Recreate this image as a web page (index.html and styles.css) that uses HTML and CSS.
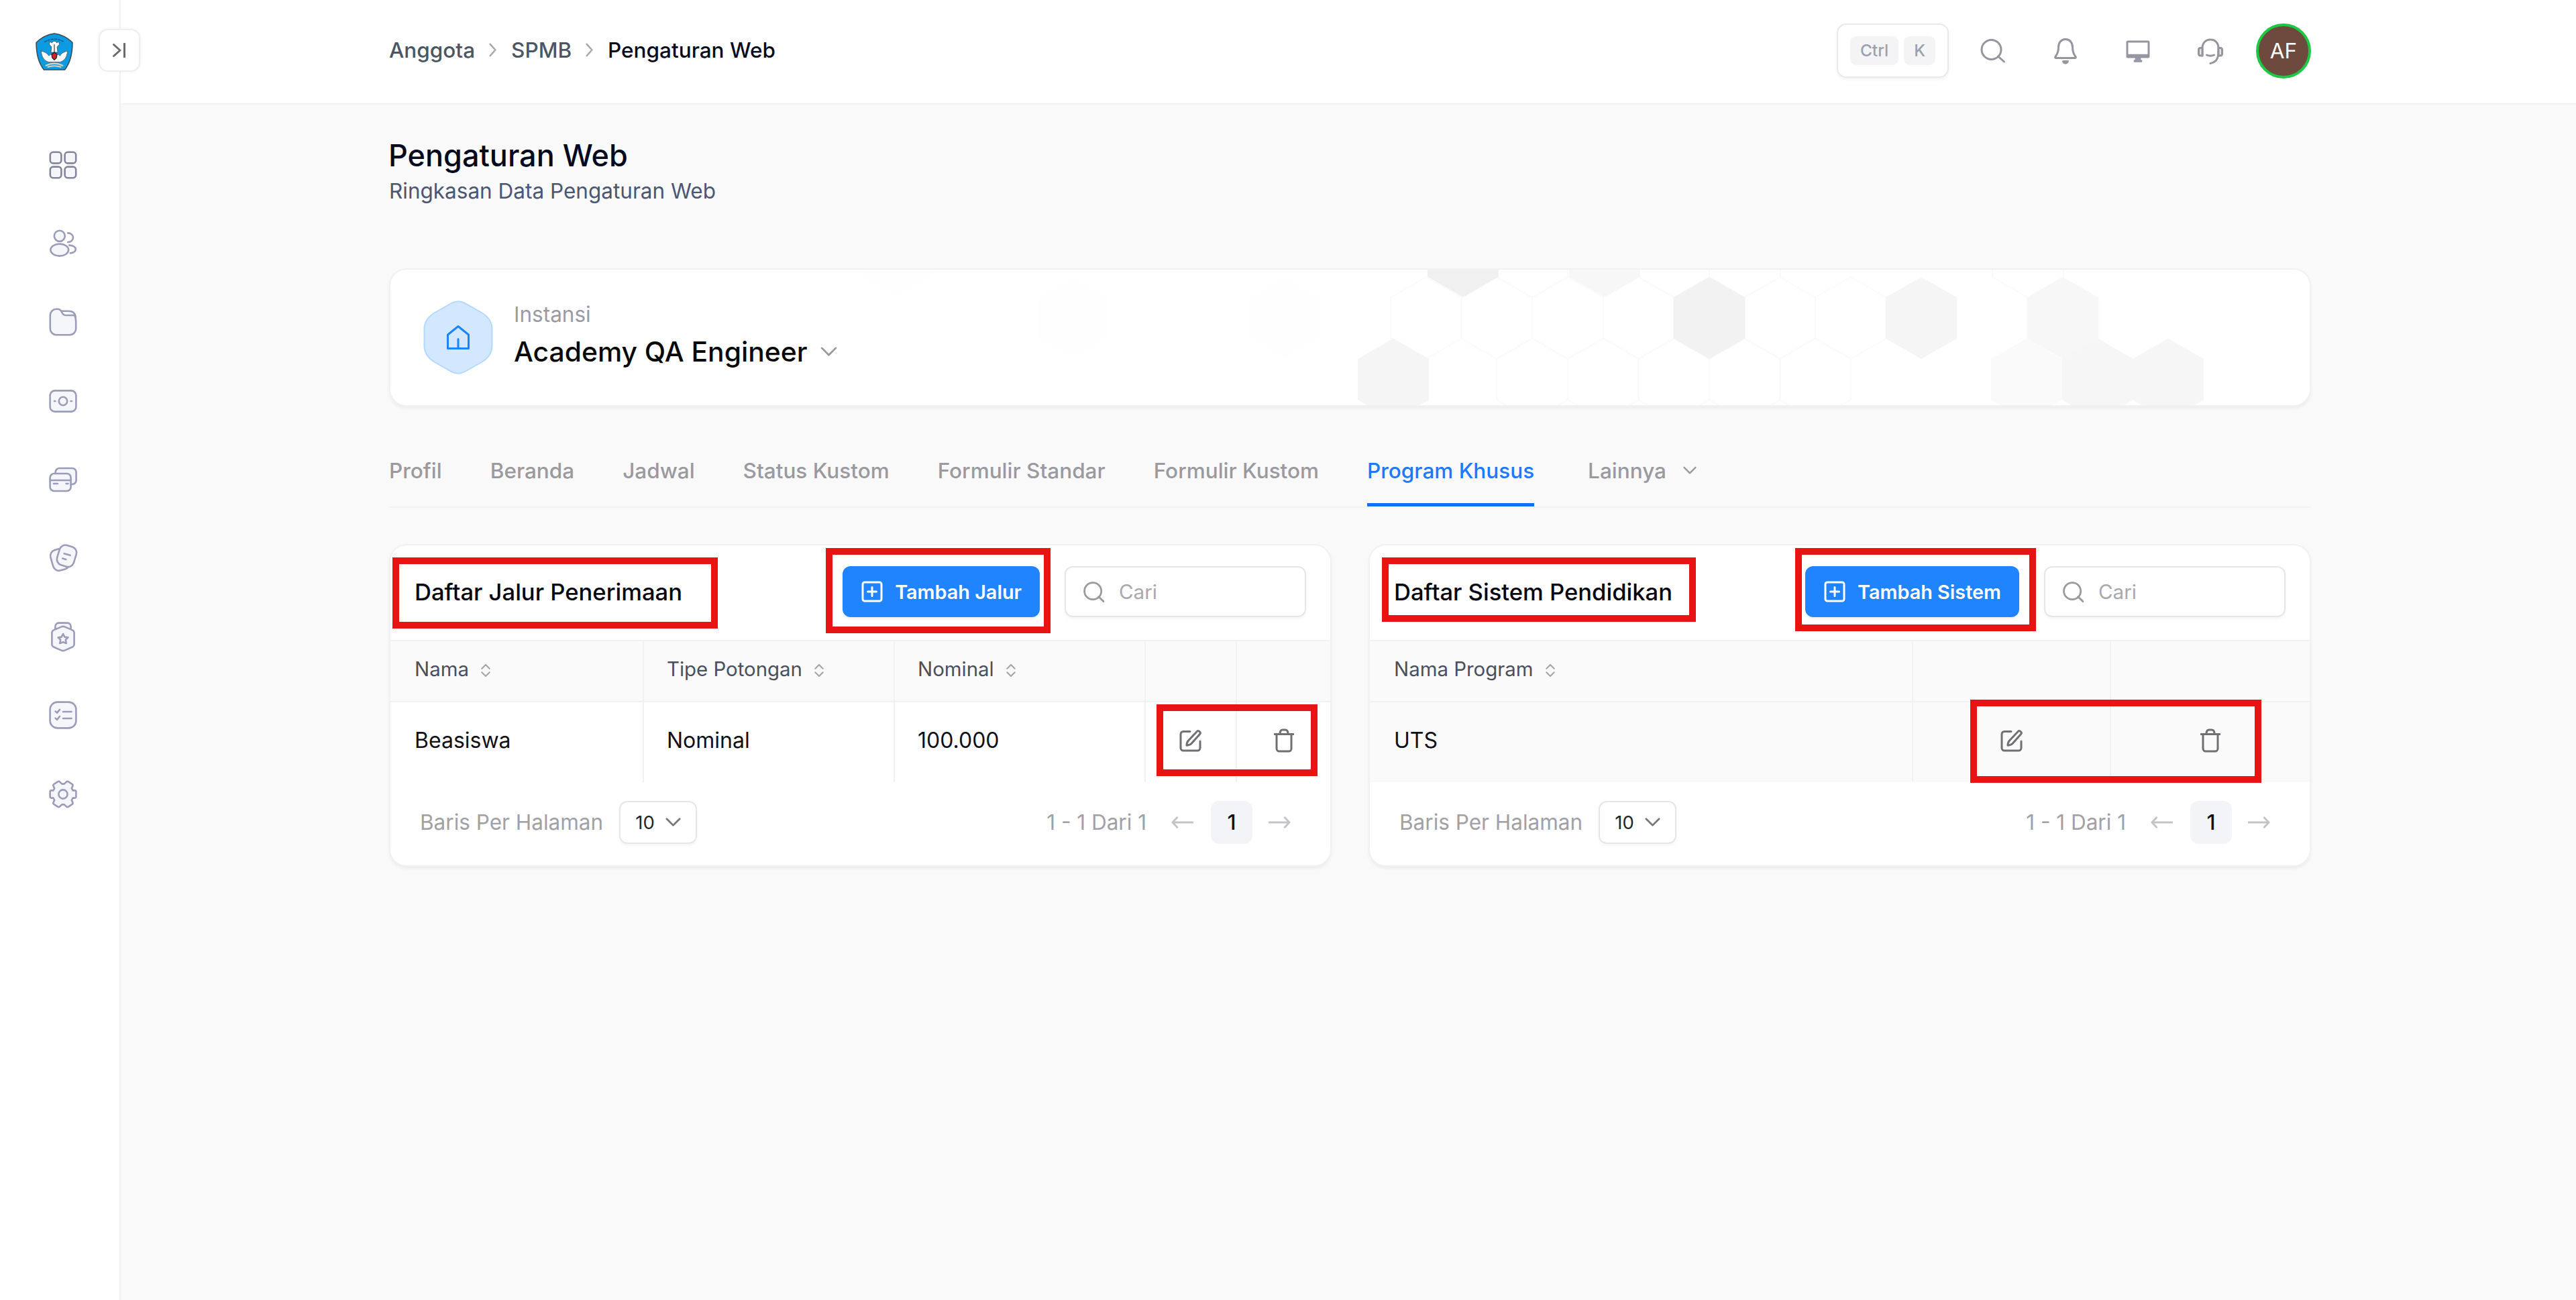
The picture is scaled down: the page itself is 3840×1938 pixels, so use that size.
FILE: index.html
```html
<!DOCTYPE html>
<html lang="id">
<head>
    <meta charset="UTF-8">
    <meta name="viewport" content="width=device-width, initial-scale=1.0">
    <title>Pengaturan Web</title>
    <link rel="stylesheet" href="styles.css">
</head>
<body>
    <!-- Shared icons -->
    <svg class="sprite" xmlns="http://www.w3.org/2000/svg">
        <symbol id="search" viewBox="0 0 34 34">
            <circle cx="15.5" cy="15.5" r="13.8"/><path d="M25 25l8 7.5"/>
        </symbol>
        <symbol id="plus" viewBox="0 0 32 32">
            <rect x="2" y="2" width="28" height="28" rx="3"/><path d="M16 9.5v13M9.5 16h13"/>
        </symbol>
        <symbol id="sort" viewBox="0 0 16 22">
            <path d="M2 8l6-6 6 6M2 14l6 6 6-6"/>
        </symbol>
        <symbol id="down" viewBox="0 0 26 16">
            <path d="M2 2l11 11L24 2"/>
        </symbol>
        <symbol id="right" viewBox="0 0 14 24">
            <path d="M2 2l9 10-9 10"/>
        </symbol>
        <symbol id="edit" viewBox="0 0 34 34">
            <path d="M16 3.500H6a4 4 0 0 0-4 4V28a4 4 0 0 0 4 4h21a4 4 0 0 0 4-4V18"/>
            <path d="M26.500 3.200c2-2 6.200 1.800 4.200 4L18 21.500c-1.500 1.600-3.500 2.300-7 2.700 0-3.500.7-5.300 2.300-7z"/>
        </symbol>
        <symbol id="trash" viewBox="0 0 30 36">
            <path d="M1 8.500h28M4 9v21a4 4 0 0 0 4 4h14a4 4 0 0 0 4-4V9M9 8c0-4 1-6 4-6h4c3 0 4 2 4 6"/>
        </symbol>
        <symbol id="prev" viewBox="0 0 34 18">
            <path d="M33 9H2M9 1.500L2 9l7 7.500"/>
        </symbol>
        <symbol id="next" viewBox="0 0 34 18">
            <path d="M1 9h31M25 1.500L32 9l-7 7.500"/>
        </symbol>
    </svg>

    <aside class="sidebar">
        <svg class="logo" viewBox="0 0 54 54">
            <path d="M27 1C35 2 45 6 53 14c0 15-3 29-11 39H12C4 43 1 29 1 14 9 6 19 2 27 1z" fill="#0c9be0" stroke="#3d4a55" stroke-width="1.500"/>
            <path d="M13 13q14-8 28 0" fill="none" stroke="#0b5f8c" stroke-width="1.500" stroke-dasharray="3 2"/>
            <path d="M20 13l4 1 1-2h4l1 2 4-1v4l-3 3 1 8h-10l1-8-3-3z" fill="#fff" stroke="#444" stroke-width=".8"/>
            <path d="M8 26c1 9 4 14 11 16h16c7-2 10-7 11-16-4 1-9 3-11 7-3-4-13-4-16 0-2-4-7-6-11-7z" fill="#fff" stroke="#555" stroke-width=".8"/>
            <path d="M27 17v12" stroke="#444" stroke-width="1.200"/>
            <path d="M23 31l4-3 4 3-1 5-3 3-3-3z" fill="#d61f26"/>
            <path d="M15 47q12-6 24 0M18 49q9-3 18 0" fill="none" stroke="#d8d2c0" stroke-width="2"/>
        </svg>
        <nav class="side-nav">
            <svg viewBox="0 0 24 24"><rect x="2.400" y="2.400" width="8.300" height="8.300" rx="2.200"/><rect x="13.300" y="2.400" width="8.300" height="8.300" rx="2.200"/><rect x="2.400" y="13.300" width="8.300" height="8.300" rx="2.200"/><rect x="13.300" y="13.300" width="8.300" height="8.300" rx="2.200"/></svg>
            <svg viewBox="0 0 24 24"><circle cx="9.400" cy="6.400" r="4"/><ellipse cx="9.400" cy="16.800" rx="6.700" ry="4.500"/><path fill="none" d="M15.600 4.200c2.200 0 3.900 1.500 3.900 3.400s-1.700 3.400-3.900 3.400M16.600 13.300c2.900.3 4.800 1.400 4.800 3s-1.700 2.600-4 2.900"/></svg>
            <svg viewBox="0 0 24 24"><path d="M11.300 3.900h4.900c2.700 0 4.700 1.500 5.200 4.200"/><path d="M2.400 7A4.600 4.600 0 0 1 7 2.400h.8c1.900 0 2.700 1 3.300 2.300.6 1.400 1.300 2.300 3 2.300h6.200c1 1.200 1.300 2.800 1.300 5v5a4.600 4.600 0 0 1-4.600 4.600H7A4.600 4.600 0 0 1 2.400 17z"/></svg>
            <svg viewBox="0 0 24 24"><rect x="2.300" y="4.200" width="19.400" height="15.600" rx="3.600"/><circle cx="12" cy="12" r="3.100"/><path d="M5.500 12h.7M17.800 12h.7"/></svg>
            <svg viewBox="0 0 24 24"><rect x="6.300" y="3.500" width="15.500" height="12" rx="3"/><rect x="2.300" y="7.500" width="15.500" height="13" rx="3"/><path d="M2.300 12.500h15.500M5 15h3M14.300 15h1.500"/></svg>
            <svg viewBox="0 0 24 24"><rect x="3.400" y="5.200" width="12.500" height="15.800" rx="4.500" transform="rotate(-16 9.600 13)"/><rect x="8.200" y="2.700" width="13" height="15.400" rx="4.500" transform="rotate(17 14.700 10.500)"/><path d="M12.800 8.600l4.500 1.300M11.600 12.300l2.600.7"/></svg>
            <svg viewBox="0 0 24 24"><path d="M6.200 7V4.400a2.600 2.600 0 0 1 2.600-2.600h6.400a2.600 2.600 0 0 1 2.600 2.600V7"/><path d="M10.800 4.700L4.700 7.300A2 2 0 0 0 3.700 9v9a2 2 0 0 0 1 1.600l6.100 2.700q1.200.5 2.400 0l6.100-2.700a2 2 0 0 0 1-1.600V9a2 2 0 0 0-1-1.700l-6.100-2.600q-1.200-.5-2.400 0z"/><path d="M12 10l1.200 2.300 2.500.4-1.800 1.700.5 2.600-2.400-.9-2.400.9.500-2.600-1.800-1.700 2.500-.4z"/></svg>
            <svg viewBox="0 0 24 24"><rect x="2.300" y="2.300" width="19.400" height="19.400" rx="5.500"/><path fill="none" d="M6.300 9.200l1.200 1.100 2-2.400M12 9.500h6.300M6.300 14.300l1.200 1.100 2-2.400M12 14.500h6.300"/></svg>
            <svg viewBox="0 0 24 24"><path d="M21.700 10.200v3.600q0 1-1 1h-1.400l-.9 1.600.8 1.800q.3 1-.5 1.400l-2.900 1.800q-.8.4-1.500-.3l-1.400-1.400h-1.800l-1.400 1.400q-.7.700-1.500.3l-2.900-1.800q-.8-.4-.5-1.400l.8-1.800-.9-1.600H3.300q-1 0-1-1v-3.600q0-1 1-1h1.400l.9-1.600-.8-1.800q-.3-1 .5-1.400l2.900-1.800q.8-.4 1.500.3l1.400 1.400h1.800l1.400-1.400q.7-.7 1.500-.3l2.900 1.800q.8.400.5 1.400l-.8 1.800.9 1.600h1.400q1 0 1 1z"/><circle cx="12" cy="12" r="3.300"/></svg>
        </nav>
        <button class="toggle" aria-label="Menu"><svg viewBox="0 0 20 22"><path d="M1.500 2.500L11 11l-9.500 8.500M17.500 1v20"/></svg></button>
    </aside>

    <div class="page">
        <header class="topbar">
            <div class="breadcrumb">
                <a>Anggota</a>
                <svg><use href="#right"/></svg>
                <a>SPMB</a>
                <svg><use href="#right"/></svg>
                <span class="current">Pengaturan Web</span>
            </div>
            <div class="tools">
                <div class="shortcut"><kbd>Ctrl</kbd><kbd>K</kbd></div>
                <svg viewBox="0 0 40 40"><circle cx="17.500" cy="18" r="14.500"/><path d="M27.500 28l9 8"/></svg>
                <svg viewBox="0 0 40 40"><path d="M5 28.500c3-4 4.500-7 4.500-14C9.500 7 14 2.500 20 2.500S30.500 7 30.500 14.500c0 7 1.500 10 4.500 14 .9 1.200.2 2-1 2H6c-1.200 0-1.900-.8-1-2z"/><path d="M16.500 35.500c1.500 3.500 5.500 3.500 7 0z"/></svg>
                <svg viewBox="0 0 40 40"><rect x="4" y="6" width="32" height="23" rx="1"/><path fill="#99a" d="M4 25.500h32v3H4zM16.500 30h7v4h2v2h-11v-2h2z" stroke-width="1.500"/></svg>
                <svg viewBox="0 0 40 40"><path d="M8 27V15.500C8 8 13 3 20 3s12 5 12 12.500V22c0 9-4 15-12 16.500M14.500 26q5.500 2.500 11 0"/><path fill="#e4e4e7" d="M8 15.500H5.500Q2.500 15.500 2.500 18v6q0 3 3 3H8zM32 15.500h2.500q3 0 3 2.500v6q0 3-3 3H32z"/></svg>
                <div class="avatar">AF</div>
            </div>
        </header>

        <main>
            <h1>Pengaturan Web</h1>
            <p class="subtitle">Ringkasan Data Pengaturan Web</p>

            <section class="banner">
                <svg class="pattern" viewBox="0 0 2861 202">
                    <!-- outlined cells -->
                    <g fill="none" stroke="#fafafa" stroke-width="2">
                        <path id="cell" d="M1755 11l53 30.500v61l-53 30.500-53-30.500v-61z"/>
                        <use href="#cell" x="-211"/><use href="#cell" x="-106"/><use href="#cell" x="106"/><use href="#cell" x="316"/><use href="#cell" x="422"/>
                        <use href="#cell" x="-53" y="91.500"/><use href="#cell" x="53" y="91.500"/><use href="#cell" x="158" y="91.500"/><use href="#cell" x="264" y="91.500"/><use href="#cell" x="369" y="91.500"/>
                        <use href="#cell" x="-53" y="-91.500"/><use href="#cell" x="158" y="-91.500"/><use href="#cell" x="264" y="-91.500"/><use href="#cell" x="686" y="-91.500"/>
                    </g>
                    <!-- filled cells -->
                    <path fill="#f0f0f0" d="M1599-81l53 30.500v61L1599 41l-53-30.500v-61z"/>
                    <path fill="#f7f7f7" d="M1810-81l53 30.500v61L1810 41l-53-30.500v-61z"/>
                    <path fill="#f2f2f2" d="M1966 11l53.500 30.500v61L1966 133l-53.500-30.500v-61z"/>
                    <path fill="#f5f5f5" d="M2282 11l53.500 30.500v61L2282 133l-53.500-30.500v-61z"/>
                    <path fill="#f7f7f7" d="M2493 11l53.500 30.500v61L2493 133l-53.500-30.500v-61z"/>
                    <path fill="#f5f5f5" d="M1495 102.500l53 30.500v61l-53 30.500-53-30.500v-61z"/>
                    <path fill="#fafafa" d="M2439 102.500l53 30.500v61l-53 30.500-53-30.500v-61z"/>
                    <path fill="#f6f6f6" d="M2545 102.500l53 30.500v61l-53 30.500-53-30.500v-61z"/>
                    <path fill="#f6f6f6" d="M2650 102.500l53 30.500v61l-53 30.500-53-30.500v-61z"/>
                    <path fill="#fefefe" d="M755-81l53 30.500v61L755 41l-53-30.500v-61zM1017 11l53 30.500v61l-53 30.500-53-30.500v-61zM1333 11l53 30.500v61l-53 30.500-53-30.500v-61z"/>
                </svg>
                <svg class="badge" viewBox="0 0 104 110">
                    <path d="M42 4q10-5.500 20 0l24 13.500q16.500 9.500 16.500 25v25q0 15.500-16.500 25L62 106q-10 5.500-20 0L18 92.500Q1.500 83 1.500 67.500v-25Q1.500 27 18 17.500z" fill="#d3e7ff" stroke="#b5d8ff" stroke-width="2"/>
                    <path d="M36.500 51L52 38.500 67.500 51v20.500h-31zM52 57.500v14" fill="none" stroke="#1b84ff" stroke-width="3" stroke-linejoin="round"/>
                </svg>
                <div class="school">
                    <span class="school-label">Instansi</span>
                    <span class="school-name">Academy QA Engineer <svg><use href="#down"/></svg></span>
                </div>
            </section>

            <nav class="tabs">
                <a>Profil</a>
                <a>Beranda</a>
                <a>Jadwal</a>
                <a>Status Kustom</a>
                <a>Formulir Standar</a>
                <a>Formulir Kustom</a>
                <a class="active">Program Khusus</a>
                <a>Lainnya <svg><use href="#down"/></svg></a>
            </nav>

            <div class="cards">
                <section class="card">
                    <div class="card-header">
                        <h2>Daftar Jalur Penerimaan</h2>
                        <button class="btn"><svg><use href="#plus"/></svg>Tambah Jalur</button>
                        <div class="search"><svg><use href="#search"/></svg>Cari</div>
                    </div>
                    <table>
                        <colgroup><col class="w-name"><col class="w-type"><col class="w-type"><col class="w-edit"><col></colgroup>
                        <thead>
                            <tr>
                                <th>Nama <svg><use href="#sort"/></svg></th>
                                <th>Tipe Potongan <svg><use href="#sort"/></svg></th>
                                <th>Nominal <svg><use href="#sort"/></svg></th>
                                <th></th>
                                <th></th>
                            </tr>
                        </thead>
                        <tbody>
                            <tr>
                                <td>Beasiswa</td>
                                <td>Nominal</td>
                                <td>100.000</td>
                                <td class="action"><svg class="edit"><use href="#edit"/></svg></td>
                                <td class="action"><svg class="trash"><use href="#trash"/></svg></td>
                            </tr>
                        </tbody>
                    </table>
                    <div class="card-footer">
                        <span>Baris Per Halaman</span>
                        <div class="select">10 <svg><use href="#down"/></svg></div>
                        <span class="range">1 - 1 Dari 1</span>
                        <svg class="arrow"><use href="#prev"/></svg>
                        <span class="page-no">1</span>
                        <svg class="arrow"><use href="#next"/></svg>
                    </div>
                </section>

                <section class="card">
                    <div class="card-header">
                        <h2>Daftar Sistem Pendidikan</h2>
                        <button class="btn"><svg><use href="#plus"/></svg>Tambah Sistem</button>
                        <div class="search"><svg><use href="#search"/></svg>Cari</div>
                    </div>
                    <table>
                        <colgroup><col class="w-program"><col class="w-action"><col></colgroup>
                        <thead>
                            <tr>
                                <th>Nama Program <svg><use href="#sort"/></svg></th>
                                <th></th>
                                <th></th>
                            </tr>
                        </thead>
                        <tbody>
                            <tr class="hover">
                                <td>UTS</td>
                                <td class="action"><svg class="edit"><use href="#edit"/></svg></td>
                                <td class="action"><svg class="trash"><use href="#trash"/></svg></td>
                            </tr>
                        </tbody>
                    </table>
                    <div class="card-footer">
                        <span>Baris Per Halaman</span>
                        <div class="select">10 <svg><use href="#down"/></svg></div>
                        <span class="range">1 - 1 Dari 1</span>
                        <svg class="arrow"><use href="#prev"/></svg>
                        <span class="page-no">1</span>
                        <svg class="arrow"><use href="#next"/></svg>
                    </div>
                </section>
            </div>
        </main>
    </div>

    <!-- Highlight boxes over the page -->
    <div class="mark mark-title-1"></div>
    <div class="mark mark-add-1"></div>
    <div class="mark mark-actions-1"></div>
    <div class="mark mark-title-2"></div>
    <div class="mark mark-add-2"></div>
    <div class="mark mark-actions-2"></div>
</body>
</html>
```
FILE: styles.css
```css
* {
    box-sizing: border-box;
}

body {
    margin: 0;
    display: flex;
    min-height: 1938px;
    position: relative;
    background: #f9f9f9;
    color: #071437;
    font-family: 'Inter', sans-serif;
    font-size: 31.5px;
    line-height: 40px;
}

svg {
    display: block;
    flex: none;
    fill: none;
    stroke: currentColor;
    stroke-linecap: round;
    stroke-linejoin: round;
}

.sprite {
    position: absolute;
    width: 0;
    height: 0;
}

h1, h2, p {
    margin: 0;
}

/* Sidebar */
.sidebar {
    position: relative;
    flex: none;
    width: 180px;
    background: #fff;
    border-right: 2px solid #f1f1f2;
}

.logo {
    width: 56px;
    height: 56px;
    margin: 49px 0 0 53px;
}

.side-nav {
    display: flex;
    flex-direction: column;
    gap: 69.2px;
    margin: 117px 0 0 70px;
    color: #9b9db8;
}

.side-nav svg {
    width: 48px;
    height: 48px;
    fill: #f5f6fa;
    stroke-width: 1.3;
}

.side-nav svg:first-child {
    color: #83859c;
}

.toggle {
    position: absolute;
    top: 43px;
    left: 147px;
    display: flex;
    align-items: center;
    justify-content: center;
    width: 62px;
    height: 64px;
    padding: 0;
    background: #fff;
    border: 2px solid #eee;
    border-radius: 14px;
    box-shadow: 0 0 5px rgba(0, 0, 0, 0.06);
    color: #6b6b6b;
}

.toggle svg {
    width: 20px;
    height: 22px;
    stroke-width: 3;
}

/* Topbar */
.page {
    flex: 1;
}

.topbar {
    display: flex;
    align-items: center;
    justify-content: space-between;
    height: 156px;
    padding: 0 395px 3px 400px;
    background: #fff;
    border-bottom: 2px solid #f1f1f2;
}

.breadcrumb {
    display: flex;
    align-items: center;
    margin-bottom: 2px;
    color: #4b5563;
    font-weight: 500;
}

.breadcrumb svg {
    width: 12px;
    height: 21px;
    margin: 0 21px;
    color: #aaa;
    stroke-width: 3;
}

.breadcrumb .current {
    color: #0a0a1c;
}

.tools {
    display: flex;
    align-items: center;
    color: #95959f;
}

.tools svg {
    width: 40px;
    height: 40px;
    margin-right: 68px;
    stroke-width: 3;
}

.shortcut {
    display: flex;
    align-items: center;
    justify-content: center;
    gap: 8px;
    width: 167px;
    height: 81px;
    margin-right: 46px;
    border: 2px solid #e9e9ec;
    border-radius: 14px;
    box-shadow: 0 3px 5px rgba(0, 0, 0, 0.05);
}

kbd {
    padding: 0 15px;
    background: #f4f4f6;
    border-radius: 9px;
    font: 500 24.5px/43px 'Inter', sans-serif;
    color: #99a1b0;
}

.avatar {
    width: 82px;
    height: 82px;
    margin-left: -20px;
    background: #6d4a3d;
    border: 4px solid #1bc943;
    border-radius: 50%;
    color: #fff;
    line-height: 74px;
    text-align: center;
}

/* Page head */
main {
    width: 2865px;
    margin-left: 400px;
    padding-top: 48px;
}

h1 {
    margin-left: -1px;
    font-size: 45px;
    font-weight: 500;
    line-height: 56px;
    color: #030a20;
}

.subtitle {
    margin: 5px 0 0;
    color: #4b5675;
}

.banner {
    position: relative;
    display: flex;
    align-items: center;
    height: 206px;
    margin-top: 95px;
    padding-left: 49px;
    background: #fff;
    border: 2px solid #f1f1f2;
    border-radius: 26px;
    box-shadow: 0 3px 4px rgba(0, 0, 0, 0.05);
    overflow: hidden;
}

.pattern {
    position: absolute;
    top: 0;
    left: 0;
    width: 2861px;
    height: 202px;
    stroke: none;
}

.badge {
    width: 104px;
    height: 110px;
}

.school {
    position: relative;
    display: flex;
    flex-direction: column;
    margin: 0 0 5px 31px;
}

.school-label {
    color: #9a9aa5;
    line-height: 44px;
}

.school-name {
    display: flex;
    align-items: center;
    gap: 20px;
    margin-bottom: -3px;
    font-size: 40.8px;
    font-weight: 500;
    line-height: 66px;
    color: #080808;
}

.school-name svg {
    width: 25px;
    height: 15px;
    color: #999;
    stroke-width: 3;
}

/* Tabs */
.tabs {
    display: flex;
    gap: 72px;
    margin-top: 65px;
    border-bottom: 2px solid #f3f3f3;
    color: #99999f;
    font-weight: 500;
}

.tabs a {
    display: flex;
    align-items: center;
    gap: 25px;
    padding-bottom: 18px;
    border-bottom: 5px solid transparent;
    line-height: 61px;
}

.tabs .active {
    color: #1b7aff;
    border-color: #106eff;
    margin-right: 8px;
}

.tabs svg {
    width: 20px;
    height: 13px;
    stroke-width: 3;
}

/* Cards */
.cards {
    display: grid;
    grid-template-columns: 1fr 1fr;
    gap: 55px;
    margin-top: 54px;
}

.card {
    background: #fff;
    border: 2px solid #f1f1f2;
    border-radius: 26px;
    box-shadow: 0 3px 4px rgba(0, 0, 0, 0.05);
    overflow: hidden;
    padding-bottom: 4px;
}

.card-header {
    display: flex;
    align-items: center;
    height: 143px;
    padding: 0 36px 3px;
    border-bottom: 2px solid #f1f1f2;
}

h2 {
    margin-right: auto;
    font-size: 34.6px;
    font-weight: 500;
    color: #05060f;
}

.btn {
    display: flex;
    align-items: center;
    gap: 18px;
    height: 76px;
    margin-right: 37px;
    padding: 0 27px 0 28px;
    background: #2184ff;
    border: none;
    border-radius: 12px;
    box-shadow: 0 2px 4px rgba(0, 0, 0, 0.08);
    color: #fff;
    font: 600 28.8px 'Inter', sans-serif;
}

.btn svg {
    width: 32px;
    height: 32px;
    stroke-width: 3;
}

.search {
    display: flex;
    align-items: center;
    gap: 22px;
    width: 360px;
    height: 76px;
    padding: 0 26px;
    border: 2px solid #e6e6e8;
    border-radius: 12px;
    box-shadow: 0 3px 5px rgba(0, 0, 0, 0.04);
    font-size: 29.6px;
    color: #a8a8b0;
}

.search svg {
    width: 31px;
    height: 31px;
    color: #99999f;
    stroke-width: 3;
}

table {
    width: 100%;
    table-layout: fixed;
    border-collapse: separate;
    border-spacing: 0;
}

.w-name { width: 378px; }
.w-type { width: 374px; }
.w-edit { width: 136px; }
.w-program { width: 810px; }
.w-action { width: 295px; }

th, td {
    padding: 0 0 6px 34px;
    border-right: 2px solid #f1f1f2;
    text-align: left;
    font-weight: 400;
    white-space: nowrap;
}

th:first-child, td:first-child {
    padding-left: 36px;
}

th:last-child, td:last-child {
    border-right: none;
}

th {
    height: 91px;
    background: #fafafa;
    border-bottom: 2px solid #f1f1f2;
    font-size: 29.4px;
    color: #4b4f5c;
}

th svg {
    display: inline-block;
    width: 16px;
    height: 21px;
    margin: 0 0 -2px 9px;
    color: #a5a5a8;
    stroke-width: 2.2;
}

td {
    height: 119px;
    font-size: 32px;
    color: #101018;
}

td.action {
    padding-left: 0;
    color: #707074;
}

.action svg {
    margin: 0 auto;
    stroke-width: 3;
}

.edit {
    width: 34px;
    height: 34px;
}

.trash {
    width: 30px;
    height: 36px;
}

tr.hover td {
    background: #fafafa;
}

.card-footer {
    display: flex;
    align-items: center;
    height: 120px;
    padding: 0 59px 0 44px;
    color: #a0a0a6;
}

.select {
    display: flex;
    align-items: center;
    justify-content: center;
    gap: 16px;
    width: 116px;
    height: 64px;
    margin-left: 24px;
    border: 2px solid #e6e6e8;
    border-radius: 12px;
    box-shadow: 0 3px 4px rgba(0, 0, 0, 0.04);
    font-size: 27.5px;
    color: #26262b;
}

.select svg {
    width: 23px;
    height: 14px;
    color: #77777c;
    stroke-width: 3.2;
}

.range {
    margin: 0 37px 0 auto;
}

.arrow {
    width: 33px;
    height: 18px;
    color: #c4c4c8;
    stroke-width: 3;
}

.page-no {
    width: 62px;
    margin: 0 24px 0 26px;
    background: #f2f4f7;
    border-radius: 12px;
    color: #111;
    font-weight: 500;
    line-height: 64px;
    text-align: center;
}

/* Highlight boxes */
.mark {
    position: absolute;
    border: 10px solid #e81313;
}

.mark-title-1 {
    left: 585px;
    top: 831px;
    width: 485px;
    height: 106px;
}

.mark-add-1 {
    left: 1231px;
    top: 817px;
    width: 335px;
    height: 127px;
}

.mark-actions-1 {
    left: 1724px;
    top: 1050px;
    width: 240px;
    height: 107px;
}

.mark-title-2 {
    left: 2060px;
    top: 831px;
    width: 468px;
    height: 96px;
}

.mark-add-2 {
    left: 2676px;
    top: 817px;
    width: 359px;
    height: 124px;
}

.mark-actions-2 {
    left: 2937px;
    top: 1043px;
    width: 434px;
    height: 124px;
}
```
